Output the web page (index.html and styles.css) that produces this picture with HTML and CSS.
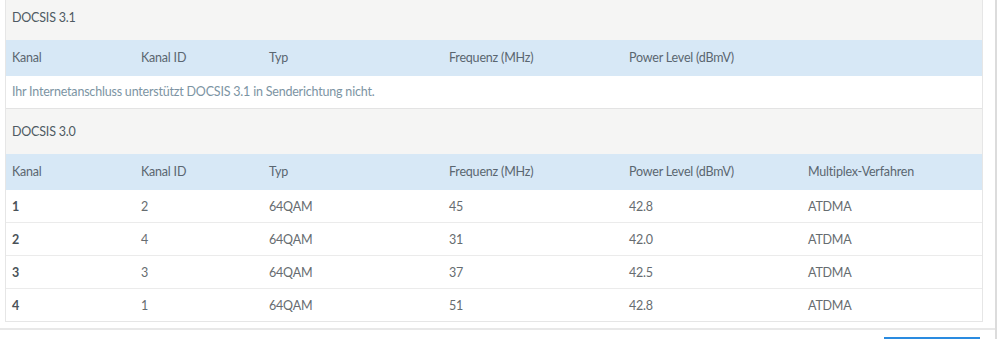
FILE: index.html
```html
<!DOCTYPE html>
<html lang="de">
<head>
<meta charset="utf-8">
<title>DOCSIS Senderichtung</title>
<link rel="stylesheet" href="styles.css">
</head>
<body>
<div class="page">
  <div class="scroller">
    <div class="panel">
      <div class="section-head">DOCSIS 3.1</div>
      <div class="row head">
        <div class="cell">Kanal</div>
        <div class="cell">Kanal ID</div>
        <div class="cell">Typ</div>
        <div class="cell">Frequenz (MHz)</div>
        <div class="cell">Power Level (dBmV)</div>
        <div class="cell"></div>
      </div>
      <div class="message">Ihr Internetanschluss unterstützt DOCSIS 3.1 in Senderichtung nicht.</div>
      <div class="section-head bordered">DOCSIS 3.0</div>
      <div class="row head">
        <div class="cell">Kanal</div>
        <div class="cell">Kanal ID</div>
        <div class="cell">Typ</div>
        <div class="cell">Frequenz (MHz)</div>
        <div class="cell">Power Level (dBmV)</div>
        <div class="cell">Multiplex-Verfahren</div>
      </div>
      <div class="row data">
        <div class="cell first">1</div>
        <div class="cell">2</div>
        <div class="cell">64QAM</div>
        <div class="cell">45</div>
        <div class="cell">42.8</div>
        <div class="cell">ATDMA</div>
      </div>
      <div class="row data">
        <div class="cell first">2</div>
        <div class="cell">4</div>
        <div class="cell">64QAM</div>
        <div class="cell">31</div>
        <div class="cell">42.0</div>
        <div class="cell">ATDMA</div>
      </div>
      <div class="row data">
        <div class="cell first">3</div>
        <div class="cell">3</div>
        <div class="cell">64QAM</div>
        <div class="cell">37</div>
        <div class="cell">42.5</div>
        <div class="cell">ATDMA</div>
      </div>
      <div class="row data last">
        <div class="cell first">4</div>
        <div class="cell">1</div>
        <div class="cell">64QAM</div>
        <div class="cell">51</div>
        <div class="cell">42.8</div>
        <div class="cell">ATDMA</div>
      </div>
    </div>
  </div>
  <div class="footer">
    <div class="button"></div>
  </div>
</div>
</body>
</html>
```

FILE: styles.css
```css
html, body {
  margin: 0;
  padding: 0;
  background: #ffffff;
  overflow: hidden;
}

body {
  font-family: Lato, "Noto Sans", sans-serif;
  font-size: 12.5px;
  letter-spacing: -0.2px;
  line-height: 18px;
  color: #5e6a72;
}

.page {
  width: 995px;
  height: 339px;
  border-right: 2px solid #dcdcdc;
  overflow: hidden;
}

.scroller {
  margin-top: -6px;
  padding-left: 5px;
}

.panel {
  width: 978px;
  box-sizing: border-box;
  border: 1px solid #e6e6e6;
}

.section-head {
  background: #f5f5f4;
  padding: 14px 6px 13px;
  color: #4e5a62;
}

.section-head.bordered {
  border-top: 1px solid #e3e3e3;
}

.row {
  display: grid;
  grid-template-columns: 129px 128px 180px 180px 179px 1fr;
}

.cell {
  padding: 0 6px;
  white-space: nowrap;
}

.row.head {
  background: #d7e8f6;
  padding: 9px 0 9px;
  color: #5a6670;
}

.message {
  padding: 7px 6px 7px;
  color: #7c94a3;
}

.row.data {
  padding: 8px 0 6px;
  border-bottom: 1px solid #ebebeb;
  color: #666c70;
}

.row.data.last {
  border-bottom: none;
}

.cell.first {
  font-weight: 700;
  color: #4a5258;
}

.footer {
  margin-top: 6px;
  border-top: 2px solid #e8e8e8;
  padding-top: 7px;
  display: flex;
  justify-content: flex-end;
  padding-right: 15px;
}

.button {
  width: 96px;
  height: 20px;
  background: #2a8be0;
}
```
